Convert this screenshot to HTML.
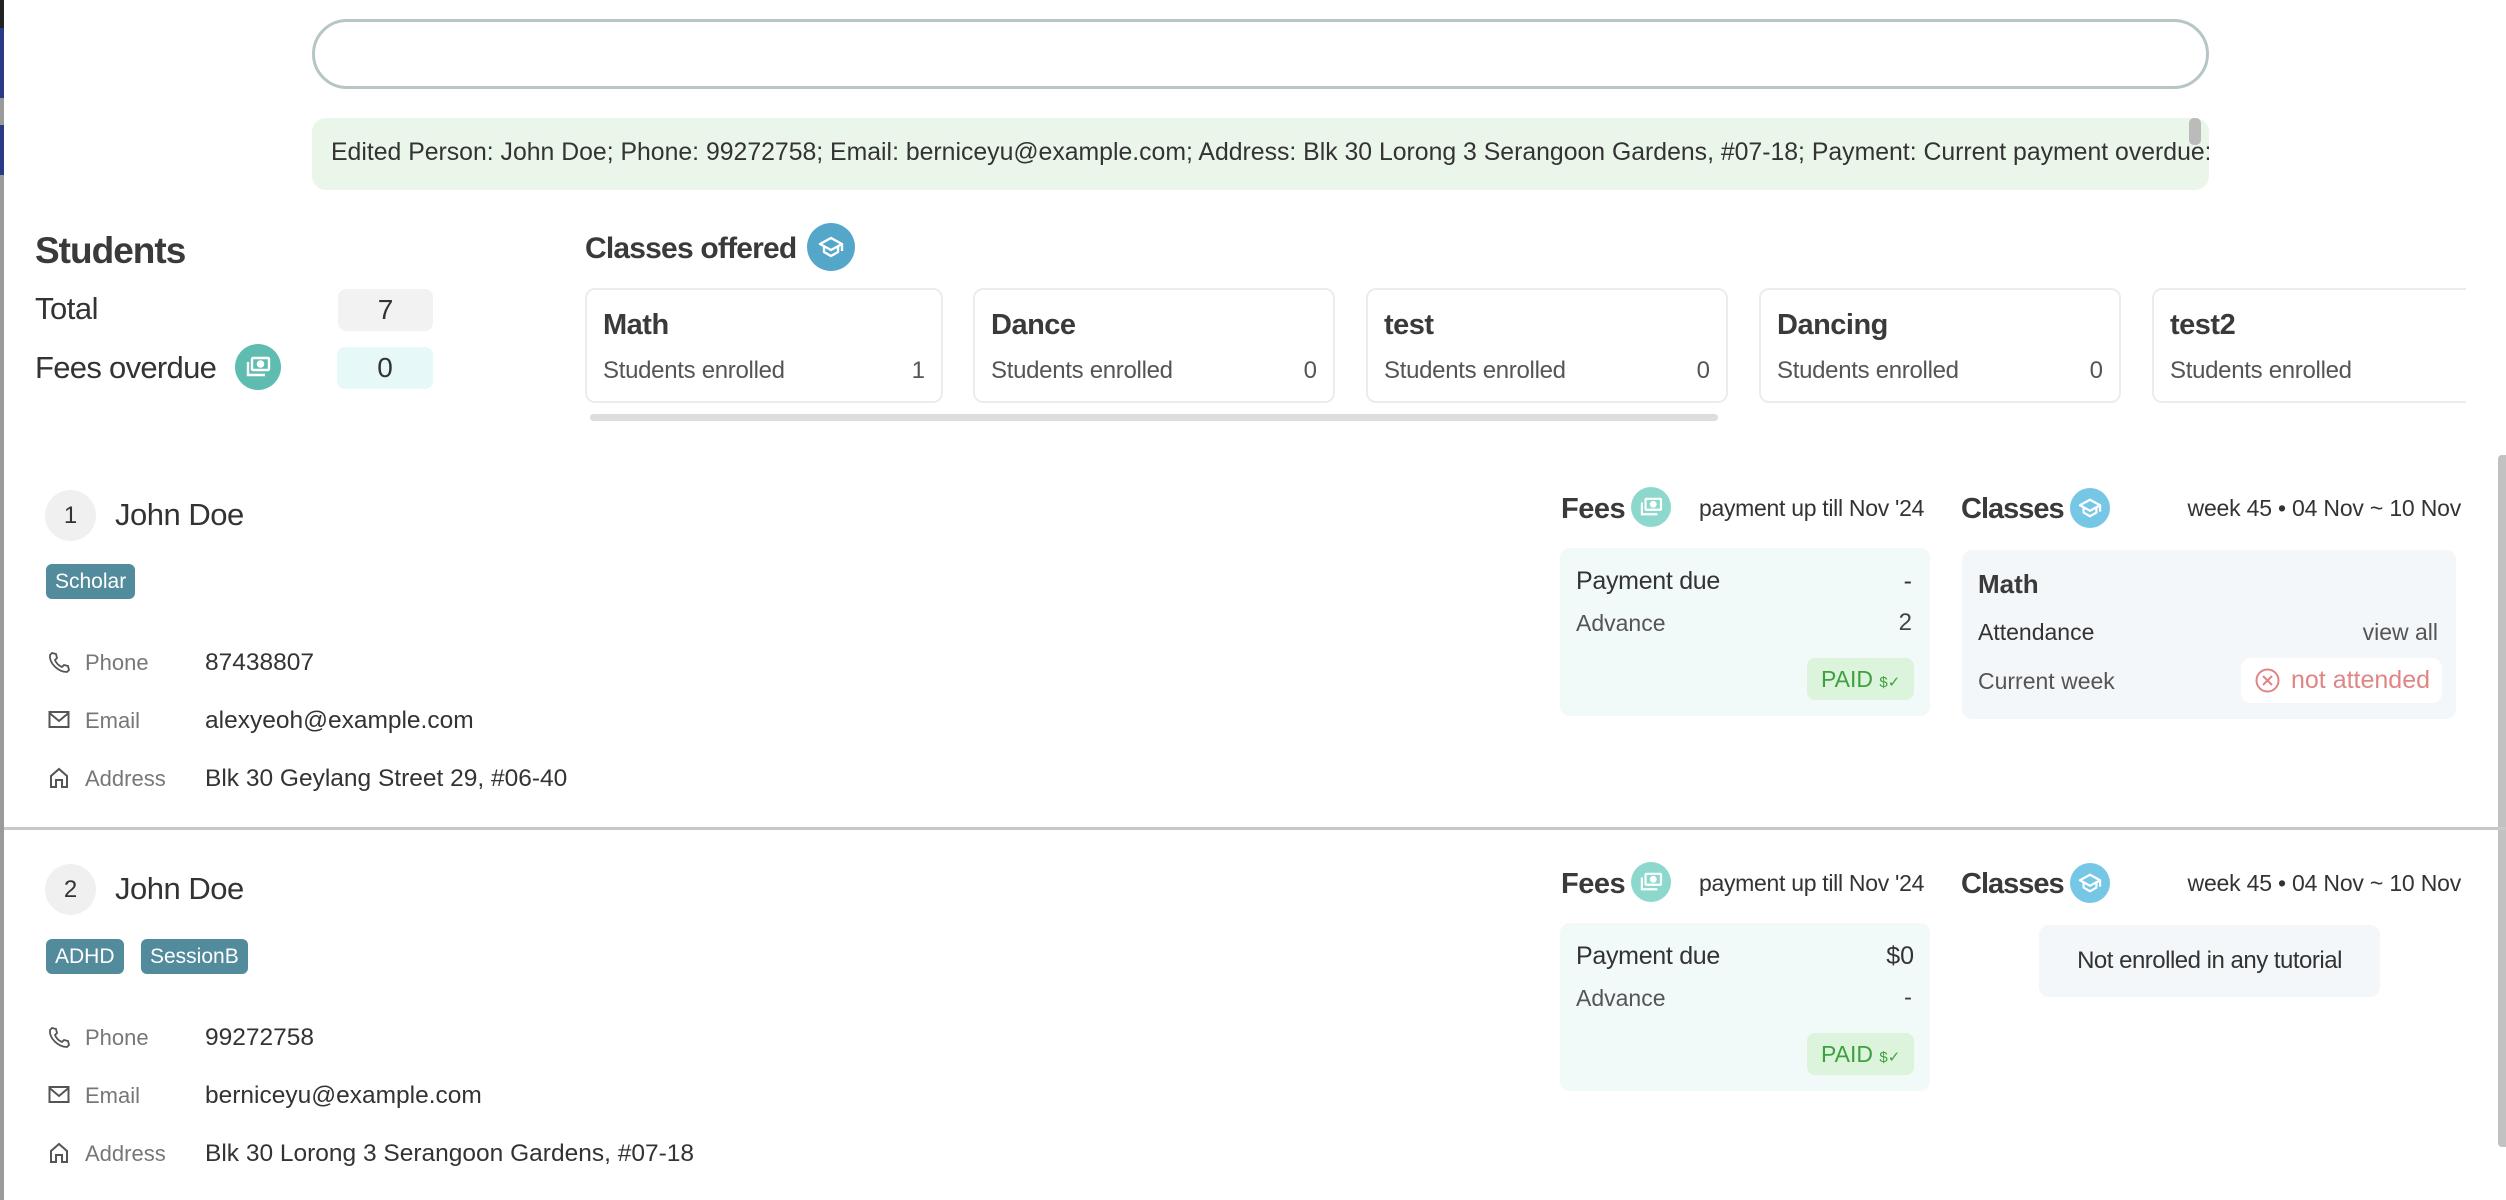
<!DOCTYPE html>
<html><head><meta charset="utf-8"><style>
*{margin:0;padding:0;box-sizing:border-box}
body{width:2506px;height:1200px;overflow:hidden;background:#fff;position:relative;font-family:"Liberation Sans",sans-serif;color:#333}
.a{position:absolute}
.t{position:absolute;white-space:nowrap;line-height:1}
.b{font-weight:bold;color:#3a3a3a}
.circ{position:absolute;border-radius:50%;display:flex;align-items:center;justify-content:center}
.card{position:absolute;top:288px;height:115px;border:2px solid #ececec;border-radius:10px;background:#fff}
.card .n{position:absolute;left:16px;top:19px;font-size:29px;font-weight:bold;color:#3a3a3a;letter-spacing:-0.5px}
.card .s{position:absolute;left:16px;top:67px;font-size:24px;color:#555;letter-spacing:-0.3px}
.card .v{position:absolute;right:16px;top:67px;font-size:24px;color:#555}
.tag{position:absolute;height:35px;border-radius:6px;background:#528b9c;color:#fff;font-size:21px;line-height:35px;padding:0 9px}
.lbl{font-size:22px;color:#777}
.val{font-size:24.5px;color:#333}
</style></head><body>
<div class="a" style="left:0;top:0;width:4px;height:1200px;background:#9a9a9a"></div>
<div class="a" style="left:0;top:0;width:4px;height:28px;background:#222"></div>
<div class="a" style="left:0;top:28px;width:4px;height:70px;background:#2a3a86"></div>
<div class="a" style="left:0;top:125px;width:4px;height:50px;background:#2a3a86"></div>

<div class="a" style="left:312px;top:19px;width:1897px;height:70px;border:3px solid #b6c6c6;border-radius:35px"></div>
<div class="a" style="left:312px;top:118px;width:1897px;height:72px;background:#ebf6ea;border-radius:14px;overflow:hidden">
<div class="t" style="left:19px;top:23px;font-size:24.8px;color:#333">Edited Person: John Doe; Phone: 99272758; Email: berniceyu@example.com; Address: Blk 30 Lorong 3 Serangoon Gardens, #07-18; Payment: Current payment overdue:</div>
<div class="a" style="right:8px;top:0;width:12px;height:27px;background:#bbb;border-radius:5px"></div>
</div>

<div class="t b" style="left:35px;top:232px;font-size:37px;letter-spacing:-1px">Students</div>
<div class="t" style="left:35px;top:293px;font-size:31px;color:#333;letter-spacing:-0.5px">Total</div>
<div class="a" style="left:338px;top:289px;width:95px;height:42px;background:#f2f2f2;border-radius:8px;font-size:28px;line-height:42px;text-align:center;color:#333">7</div>
<div class="t" style="left:35px;top:352px;font-size:31px;color:#333;letter-spacing:-0.7px">Fees overdue</div>
<div class="circ" style="left:235px;top:344px;width:46px;height:46px;background:#5fbcb0">
<svg width="26" height="22" viewBox="0 0 26 22" fill="none" stroke="#fff" stroke-width="2.4"><rect x="7" y="2" width="17" height="12" rx="1"/><circle cx="15.5" cy="8" r="2.6" fill="#fff"/><path d="M3 6v13h17"/></svg></div>
<div class="a" style="left:337px;top:347px;width:96px;height:42px;background:#e6f8f8;border-radius:8px;font-size:28px;line-height:42px;text-align:center;color:#333">0</div>

<div class="t b" style="left:585px;top:234px;font-size:30px;letter-spacing:-0.8px">Classes offered</div>
<div class="circ" style="left:807px;top:223px;width:48px;height:48px;background:#55a7c9">
<svg width="26" height="24" viewBox="0 0 26 24" fill="none" stroke="#fff" stroke-width="2.4" stroke-linejoin="round"><path d="M13 3L2 9l11 6 11-6z"/><path d="M6 11v6l7 4 7-4v-6"/><path d="M24 9v7"/></svg></div>

<div class="card" style="left:585px;width:358px"><div class="n">Math</div><div class="s">Students enrolled</div><div class="v">1</div></div>
<div class="card" style="left:973px;width:362px"><div class="n">Dance</div><div class="s">Students enrolled</div><div class="v">0</div></div>
<div class="card" style="left:1366px;width:362px"><div class="n">test</div><div class="s">Students enrolled</div><div class="v">0</div></div>
<div class="card" style="left:1759px;width:362px"><div class="n">Dancing</div><div class="s">Students enrolled</div><div class="v">0</div></div>
<div class="a" style="left:2152px;top:288px;width:314px;height:115px;overflow:hidden"><div class="card" style="left:0;top:0;width:362px"><div class="n">test2</div><div class="s">Students enrolled</div><div class="v">0</div></div></div>
<div class="a" style="left:590px;top:414px;width:1128px;height:7px;background:#ddd;border-radius:4px"></div>

<div class="a" style="left:2498px;top:455px;width:8px;height:692px;background:#c2c2c2;border-radius:4px 0 0 4px"></div>

<!-- Person 1 -->
<div class="circ" style="left:45px;top:490px;width:51px;height:51px;background:#f0f0f0;font-size:24px;color:#333">1</div>
<div class="t" style="left:115px;top:499px;font-size:31px;color:#333;letter-spacing:-0.5px">John Doe</div>
<div class="tag" style="left:46px;top:564px">Scholar</div>
<svg class="a" style="left:48px;top:651px" width="22" height="22" viewBox="0 0 22 22" fill="none" stroke="#555" stroke-width="1.8"><path d="M4 2l4 1 1 4-2 2c1 3 4 6 7 7l2-2 4 1 1 4-2 2C10 21 1 12 2 4z"/></svg>
<div class="t lbl" style="left:85px;top:652px">Phone</div>
<div class="t val" style="left:205px;top:651px">87438807</div>
<svg class="a" style="left:48px;top:710px" width="22" height="20" viewBox="0 0 22 20" fill="none" stroke="#555" stroke-width="2"><rect x="1.5" y="2" width="19" height="15"/><path d="M1.5 3l9.5 8 9.5-8"/></svg>
<div class="t lbl" style="left:85px;top:710px">Email</div>
<div class="t val" style="left:205px;top:709px">alexyeoh@example.com</div>
<svg class="a" style="left:49px;top:767px" width="20" height="22" viewBox="0 0 20 22" fill="none" stroke="#555" stroke-width="2"><path d="M2 20V9l8-7 8 7v11h-5v-7H7v7z"/></svg>
<div class="t lbl" style="left:85px;top:768px">Address</div>
<div class="t val" style="left:205px;top:767px">Blk 30 Geylang Street 29, #06-40</div>

<div class="t b" style="left:1561px;top:495px;font-size:29px;letter-spacing:-0.5px">Fees</div>
<div class="circ" style="left:1631px;top:487px;width:40px;height:40px;background:#8dd8cc">
<svg width="24" height="20" viewBox="0 0 26 22" fill="none" stroke="#fff" stroke-width="2.4"><rect x="7" y="2" width="17" height="12" rx="1"/><circle cx="15.5" cy="8" r="2.6" fill="#fff"/><path d="M3 6v13h17"/></svg></div>
<div class="t" style="left:1699px;top:497px;font-size:23px;color:#333;letter-spacing:-0.3px">payment up till Nov '24</div>
<div class="a" style="left:1560px;top:548px;width:370px;height:168px;background:#f1faf9;border-radius:10px">
<div class="t" style="left:16px;top:21px;font-size:25px;color:#333;letter-spacing:-0.3px">Payment due</div>
<div class="t" style="right:18px;top:21px;font-size:25px;color:#333">-</div>
<div class="t" style="left:16px;top:64px;font-size:23px;color:#555">Advance</div>
<div class="t" style="right:18px;top:63px;font-size:24px;color:#444">2</div>
<div class="a" style="left:247px;top:110px;width:107px;height:42px;background:#dcf3dc;border-radius:8px;color:#3ea03e;font-size:23px;line-height:42px;padding-left:14px">PAID <span style="font-size:15px">$✓</span></div>
</div>

<div class="t b" style="left:1961px;top:495px;font-size:29px;letter-spacing:-1px">Classes</div>
<div class="circ" style="left:2070px;top:488px;width:40px;height:40px;background:#76c7e6">
<svg width="24" height="22" viewBox="0 0 26 24" fill="none" stroke="#fff" stroke-width="2.4" stroke-linejoin="round"><path d="M13 3L2 9l11 6 11-6z"/><path d="M6 11v6l7 4 7-4v-6"/><path d="M24 9v7"/></svg></div>
<div class="t" style="right:45px;top:497px;font-size:23px;color:#333;letter-spacing:-0.2px">week 45 • 04 Nov ~ 10 Nov</div>
<div class="a" style="left:1962px;top:550px;width:494px;height:169px;background:#f3f7fa;border-radius:10px">
<div class="t b" style="left:16px;top:21px;font-size:26px">Math</div>
<div class="t" style="left:16px;top:71px;font-size:23px;color:#333">Attendance</div>
<div class="t" style="right:18px;top:71px;font-size:23px;color:#555">view all</div>
<div class="t" style="left:16px;top:120px;font-size:23px;color:#555">Current week</div>
<div class="a" style="left:279px;top:108px;width:201px;height:45px;background:#fff;border-radius:10px;color:#e08585;font-size:25px;line-height:45px">
<svg class="a" style="left:14px;top:10px" width="25" height="25" viewBox="0 0 25 25" fill="none" stroke="#e08585" stroke-width="2"><circle cx="12.5" cy="12.5" r="11"/><path d="M8 8l9 9M17 8l-9 9"/></svg>
<span style="position:absolute;left:50px">not attended</span></div>
</div>

<div class="a" style="left:4px;top:827px;width:2502px;height:3px;background:#c8c8c8"></div>

<!-- Person 2 -->
<div class="circ" style="left:45px;top:864px;width:51px;height:51px;background:#f0f0f0;font-size:24px;color:#333">2</div>
<div class="t" style="left:115px;top:873px;font-size:31px;color:#333;letter-spacing:-0.5px">John Doe</div>
<div class="tag" style="left:46px;top:939px">ADHD</div>
<div class="tag" style="left:141px;top:939px">SessionB</div>
<svg class="a" style="left:48px;top:1026px" width="22" height="22" viewBox="0 0 22 22" fill="none" stroke="#555" stroke-width="1.8"><path d="M4 2l4 1 1 4-2 2c1 3 4 6 7 7l2-2 4 1 1 4-2 2C10 21 1 12 2 4z"/></svg>
<div class="t lbl" style="left:85px;top:1027px">Phone</div>
<div class="t val" style="left:205px;top:1026px">99272758</div>
<svg class="a" style="left:48px;top:1085px" width="22" height="20" viewBox="0 0 22 20" fill="none" stroke="#555" stroke-width="2"><rect x="1.5" y="2" width="19" height="15"/><path d="M1.5 3l9.5 8 9.5-8"/></svg>
<div class="t lbl" style="left:85px;top:1085px">Email</div>
<div class="t val" style="left:205px;top:1084px">berniceyu@example.com</div>
<svg class="a" style="left:49px;top:1142px" width="20" height="22" viewBox="0 0 20 22" fill="none" stroke="#555" stroke-width="2"><path d="M2 20V9l8-7 8 7v11h-5v-7H7v7z"/></svg>
<div class="t lbl" style="left:85px;top:1143px">Address</div>
<div class="t val" style="left:205px;top:1142px">Blk 30 Lorong 3 Serangoon Gardens, #07-18</div>

<div class="t b" style="left:1561px;top:870px;font-size:29px;letter-spacing:-0.5px">Fees</div>
<div class="circ" style="left:1631px;top:862px;width:40px;height:40px;background:#8dd8cc">
<svg width="24" height="20" viewBox="0 0 26 22" fill="none" stroke="#fff" stroke-width="2.4"><rect x="7" y="2" width="17" height="12" rx="1"/><circle cx="15.5" cy="8" r="2.6" fill="#fff"/><path d="M3 6v13h17"/></svg></div>
<div class="t" style="left:1699px;top:872px;font-size:23px;color:#333;letter-spacing:-0.3px">payment up till Nov '24</div>
<div class="a" style="left:1560px;top:923px;width:370px;height:168px;background:#f1faf9;border-radius:10px">
<div class="t" style="left:16px;top:21px;font-size:25px;color:#333;letter-spacing:-0.3px">Payment due</div>
<div class="t" style="right:16px;top:21px;font-size:25px;color:#333">$0</div>
<div class="t" style="left:16px;top:64px;font-size:23px;color:#555">Advance</div>
<div class="t" style="right:18px;top:63px;font-size:24px;color:#444">-</div>
<div class="a" style="left:247px;top:110px;width:107px;height:42px;background:#dcf3dc;border-radius:8px;color:#3ea03e;font-size:23px;line-height:42px;padding-left:14px">PAID <span style="font-size:15px">$✓</span></div>
</div>

<div class="t b" style="left:1961px;top:870px;font-size:29px;letter-spacing:-1px">Classes</div>
<div class="circ" style="left:2070px;top:863px;width:40px;height:40px;background:#76c7e6">
<svg width="24" height="22" viewBox="0 0 26 24" fill="none" stroke="#fff" stroke-width="2.4" stroke-linejoin="round"><path d="M13 3L2 9l11 6 11-6z"/><path d="M6 11v6l7 4 7-4v-6"/><path d="M24 9v7"/></svg></div>
<div class="t" style="right:45px;top:872px;font-size:23px;color:#333;letter-spacing:-0.2px">week 45 • 04 Nov ~ 10 Nov</div>
<div class="a" style="left:2039px;top:925px;width:341px;height:72px;background:#f3f7fa;border-radius:10px;font-size:24px;line-height:72px;text-align:center;color:#333;letter-spacing:-0.5px">Not enrolled in any tutorial</div>
</body></html>
